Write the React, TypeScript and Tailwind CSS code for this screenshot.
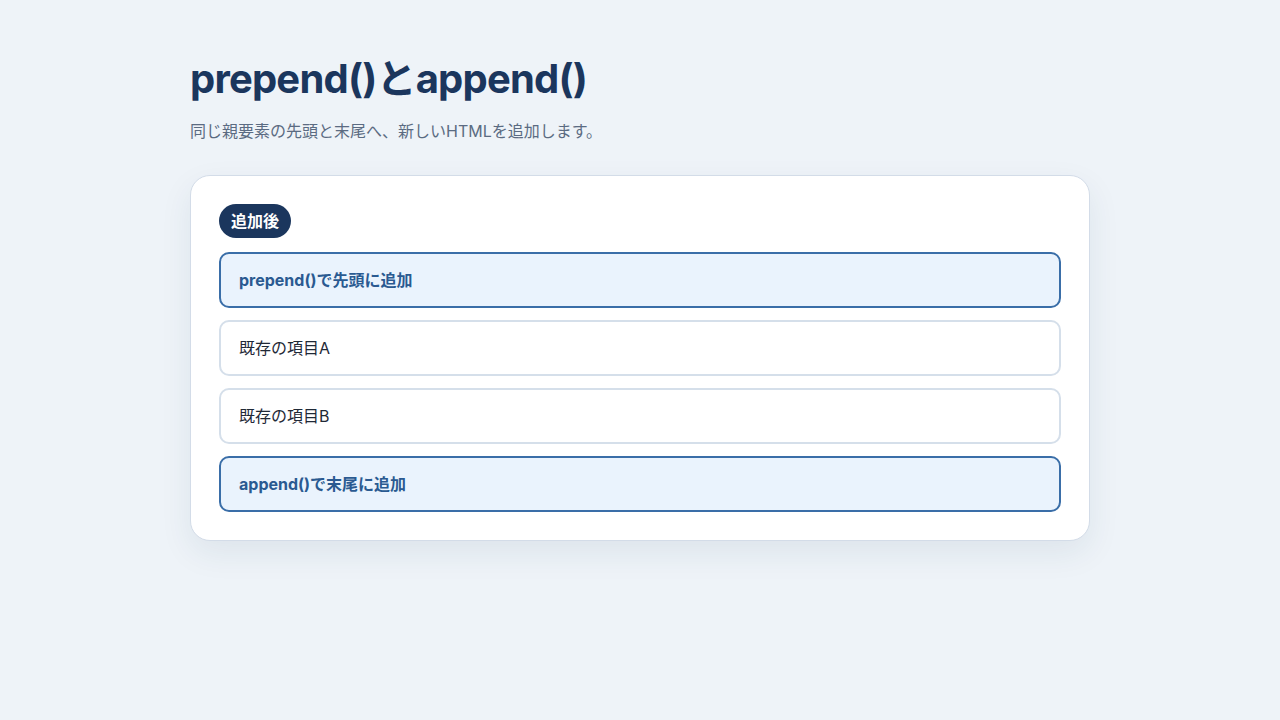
type Item = { label: string; added?: boolean }

const items: Item[] = [
  { label: 'prepend()で先頭に追加', added: true },
  { label: '既存の項目A' },
  { label: '既存の項目B' },
  { label: 'append()で末尾に追加', added: true },
]

const font = { fontFamily: 'Inter, "Noto Sans CJK JP", sans-serif' }

export default function App() {
  return (
    <div className="min-h-screen bg-[#eef3f8] text-[#1f2937]" style={font}>
      <main className="mx-auto w-[900px] pt-[53px]">
        <h1 className="text-[40px] font-bold leading-[52px] tracking-[-0.8px] text-[#1b365d]">
          prepend()とappend()
        </h1>
        <p className="mt-[14px] text-[16px] leading-[24px] text-[#5b6b82]">
          同じ親要素の先頭と末尾へ、新しいHTMLを追加します。
        </p>

        <section className="mt-[32px] rounded-[20px] border border-[#d3dce8] bg-white px-[28px] py-[28px] shadow-[0_12px_32px_rgba(30,58,95,0.08)]">
          <span className="inline-flex h-[34px] items-center rounded-full bg-[#1b365d] px-[12px] text-[16px] font-bold text-white">
            追加後
          </span>
          <ul className="mt-[14px] flex flex-col gap-[12px]">
            {items.map((item) => (
              <li
                key={item.label}
                className={
                  item.added
                    ? 'flex h-[56px] items-center rounded-[10px] border-2 border-[#3a6ea8] bg-[#eaf3fd] px-[18px] text-[16px] font-bold text-[#2a5a91]'
                    : 'flex h-[56px] items-center rounded-[10px] border-2 border-[#d5dfea] bg-white px-[18px] text-[16px] text-[#1f2937]'
                }
              >
                {item.label}
              </li>
            ))}
          </ul>
        </section>
      </main>
    </div>
  )
}
